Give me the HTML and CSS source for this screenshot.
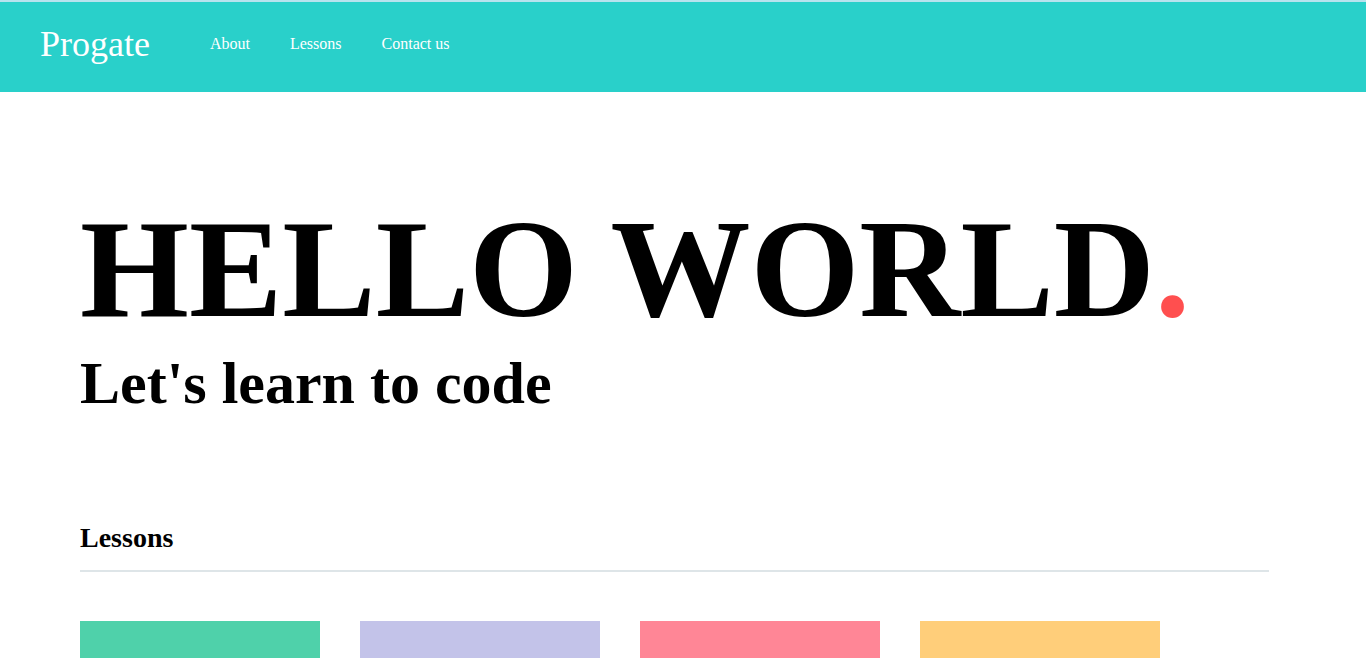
FILE: index.html
```html
<!DOCTYPE html>
<html lang="en">
<head>
<meta charset="utf-8">
<title>Progate</title>
<link rel="stylesheet" href="styles.css">
</head>
<body>
<header class="header">
  <div class="logo">Progate</div>
  <nav class="nav">
    <a class="nav-link" href="#">About</a>
    <a class="nav-link" href="#">Lessons</a>
    <a class="nav-link" href="#">Contact us</a>
  </nav>
</header>
<main class="main">
  <section class="hero">
    <h1 class="hero-title">HELLO WORLD<span class="dot">.</span></h1>
    <p class="hero-sub">Let's learn to code</p>
  </section>
  <section class="lessons">
    <h2 class="section-title">Lessons</h2>
    <div class="cards">
      <div class="card"><div class="card-image green"></div><p class="card-text">HTML &amp; CSS</p></div>
      <div class="card"><div class="card-image lavender"></div><p class="card-text">JavaScript</p></div>
      <div class="card"><div class="card-image pink"></div><p class="card-text">Ruby</p></div>
      <div class="card"><div class="card-image yellow"></div><p class="card-text">Ruby on Rails</p></div>
    </div>
  </section>
</main>
<footer class="footer">
  <div class="footer-logo">Progate</div>
  <p class="footer-text">Copyright 2024 Progate</p>
</footer>
</body>
</html>
```
FILE: styles.css
```css
html, body {
  margin: 0;
  padding: 0;
}
body {
  font-family: "Liberation Serif", "Times New Roman", serif;
  color: #000;
  background: #fff;
}
.header {
  box-sizing: border-box;
  height: 92px;
  border-top: 2px solid #b7e3ee;
  background: #29d0ca;
  display: flex;
  align-items: center;
  padding: 0 0 6px 40px;
}
.logo {
  font-size: 36px;
  color: #fff;
}
.nav {
  display: flex;
  gap: 40px;
  margin-left: 60px;
}
.nav-link {
  font-size: 16px;
  color: #fff;
  text-decoration: none;
}
.main {
  padding: 0 80px;
  max-width: 1189px;
}
.hero {
  padding-top: 96px;
}
.hero-title {
  margin: 0;
  font-size: 140px;
  font-weight: bold;
  line-height: normal;
  white-space: nowrap;
}
.dot {
  color: #ff4f4f;
}
.hero-sub {
  margin: 0;
  font-size: 60px;
  font-weight: bold;
  line-height: normal;
}
.lessons {
  margin-top: 104px;
}
.section-title {
  margin: 0;
  font-size: 28px;
  font-weight: bold;
  line-height: normal;
  padding-bottom: 16px;
  border-bottom: 2px solid #dee5e8;
}
.cards {
  display: flex;
  gap: 40px;
  margin-top: 49px;
}
.card {
  width: 240px;
}
.card-image {
  height: 200px;
}
.green { background: #4fd1aa; }
.lavender { background: #c3c3e9; }
.pink { background: #ff8696; }
.yellow { background: #ffce7a; }
.card-text {
  margin: 16px 0 0;
  font-size: 20px;
}
.footer {
  margin-top: 700px;
  background: #29d0ca;
  color: #fff;
  padding: 80px 40px 200px;
}
.footer-logo {
  font-size: 36px;
}
.footer-text {
  margin: 16px 0 0;
  font-size: 14px;
}
```
